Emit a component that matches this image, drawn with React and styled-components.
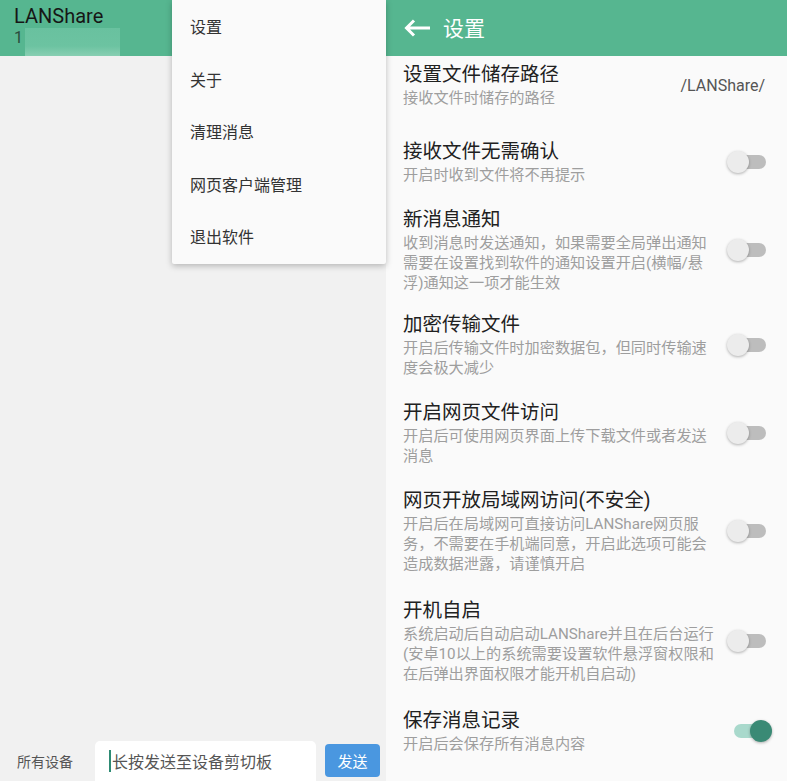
import React, {useState} from 'react'
import styled, {createGlobalStyle} from "styled-components";

const GlobalStyle = createGlobalStyle`
  html, body {
    margin: 0;
    padding: 0;
    height: 100%;
    overflow: hidden;
  }
  body {
    font-family: Roboto, "Noto Sans CJK SC", sans-serif;
    background: #f1f1f1;
  }
  #root {
    height: 100%;
  }
`

const GREEN = '#56b690'

const settings = [
    {title: '设置文件储存路径', desc: '接收文件时储存的路径', value: '/LANShare/', pad: '6px 0 20px'},
    {title: '接收文件无需确认', desc: '开启时收到文件将不再提示', toggle: false},
    {title: '新消息通知', desc: '收到消息时发送通知，如果需要全局弹出通知需要在设置找到软件的通知设置开启(横幅/悬浮)通知这一项才能生效', toggle: false, pad: '11px 0 8px'},
    {title: '加密传输文件', desc: '开启后传输文件时加密数据包，但同时传输速度会极大减少', toggle: false},
    {title: '开启网页文件访问', desc: '开启后可使用网页界面上传下载文件或者发送消息', toggle: false},
    {title: '网页开放局域网访问(不安全)', desc: '开启后在局域网可直接访问LANShare网页服务，不需要在手机端同意，开启此选项可能会造成数据泄露，请谨慎开启', toggle: false, pad: '11px 0 13px'},
    {title: '开机自启', desc: '系统启动后自动启动LANShare并且在后台运行(安卓10以上的系统需要设置软件悬浮窗权限和在后弹出界面权限才能开机自启动)', toggle: false, pad: '11px 0 13px'},
    {title: '保存消息记录', desc: '开启后会保存所有消息内容', toggle: true},
]

const menuItems = ['设置', '关于', '清理消息', '网页客户端管理', '退出软件']

function App() {
    const [ values, setValues ] = useState(settings.map(item => item.toggle))

    return (
        <Screen>
            <GlobalStyle/>
            <LeftPane>
                <MainHeader>
                    <AppName>LANShare</AppName>
                    <AppAddress>1<Redacted/></AppAddress>
                </MainHeader>
                <Messages/>
                <SendBar>
                    <Target>所有设备</Target>
                    <InputBox>
                        <Caret/>长按发送至设备剪切板
                    </InputBox>
                    <SendButton>发送</SendButton>
                </SendBar>
                <Menu>
                    {menuItems.map(item => <MenuItem key={item}>{item}</MenuItem>)}
                </Menu>
            </LeftPane>
            <RightPane>
                <SettingsHeader>
                    <svg width="27" height="18" viewBox="0 0 27 18">
                        <path d="M2 9 H26 M10 1.5 L2.5 9 L10 16.5" stroke="#fff" strokeWidth="3" fill="none"/>
                    </svg>
                    <HeaderTitle>设置</HeaderTitle>
                </SettingsHeader>
                <SettingsList>
                    {settings.map((item, index) => <Row key={item.title} $pad={item.pad}>
                        <RowText>
                            <RowTitle>{item.title}</RowTitle>
                            <RowDesc>{item.desc}</RowDesc>
                        </RowText>
                        {item.value && <RowValue>{item.value}</RowValue>}
                        {!item.value && <Switch onClick={() => {
                            const next = [...values]
                            next[index] = !next[index]
                            setValues(next)
                        }}>
                            <Track $on={values[index]}/>
                            <Thumb $on={values[index]}/>
                        </Switch>}
                    </Row>)}
                </SettingsList>
            </RightPane>
        </Screen>
    )
}

const Screen = styled.div`
  display: flex;
  height: 100%;
  width: 787px;
`

const LeftPane = styled.div`
  position: relative;
  width: 386px;
  flex: 0 0 386px;
  display: flex;
  flex-direction: column;
  background: #f1f1f1;
`

const MainHeader = styled.div`
  height: 56px;
  background: ${GREEN};
  padding-left: 14px;
  box-sizing: border-box;
  overflow: hidden;
`

const AppName = styled.div`
  font-size: 20px;
  line-height: 20px;
  padding-top: 6px;
  color: #161616;
`

const AppAddress = styled.div`
  display: flex;
  font-size: 16px;
  line-height: 20px;
  color: #2a4a3c;
  margin-top: 2px;
`

const Redacted = styled.span`
  display: inline-block;
  width: 95px;
  height: 30px;
  margin-left: 2px;
  background: linear-gradient(180deg, #69c19f 0%, #6cc3a1 60%, #8ed1b6 100%);
`

const Messages = styled.div`
  flex: 1;
`

const SendBar = styled.div`
  display: flex;
  align-items: flex-end;
  height: 40px;
  padding-left: 17px;
`

const Target = styled.div`
  font-size: 14px;
  color: #555;
  width: 78px;
  line-height: 20px;
  padding-bottom: 9px;
`

const InputBox = styled.div`
  display: flex;
  align-items: center;
  width: 221px;
  height: 40px;
  box-sizing: border-box;
  padding-left: 14px;
  background: #fff;
  border-radius: 5px 5px 0 0;
  font-size: 16px;
  color: #555;
`

const Caret = styled.span`
  display: inline-block;
  width: 2px;
  height: 22px;
  background: #2e8b74;
  margin-right: 1px;
`

const SendButton = styled.div`
  display: flex;
  align-items: center;
  justify-content: center;
  width: 55px;
  height: 33px;
  margin: 0 0 4px 9px;
  background: #4a97e0;
  border-radius: 4px;
  color: #fff;
  font-size: 15px;
`

const Menu = styled.div`
  position: absolute;
  left: 172px;
  top: 0;
  width: 214px;
  padding-bottom: 1px;
  background: #fafafa;
  box-shadow: 0 2px 6px rgba(0, 0, 0, 0.25);
  border-radius: 0 0 2px 2px;
`

const MenuItem = styled.div`
  height: 52.5px;
  display: flex;
  align-items: center;
  padding-left: 18px;
  font-size: 16px;
  color: #333;
`

const RightPane = styled.div`
  flex: 1;
  min-width: 0;
  display: flex;
  flex-direction: column;
  background: #fafafa;
`

const SettingsHeader = styled.div`
  height: 56px;
  flex: 0 0 56px;
  display: flex;
  align-items: center;
  padding-left: 18px;
  background: ${GREEN};
  color: #fff;
`

const HeaderTitle = styled.div`
  font-size: 21px;
  margin-left: 12px;
  margin-top: -2px;
`

const SettingsList = styled.div`
  display: flex;
  flex-direction: column;
  padding-left: 17px;
`

const Row = styled.div`
  display: flex;
  align-items: center;
  padding: ${props => props.$pad || '11px 0'};
`

const RowText = styled.div`
  flex: 1 1 auto;
  min-width: 0;
  max-width: 317px;
`

const RowTitle = styled.div`
  font-size: 19.5px;
  line-height: 26px;
  color: #212121;
`

const RowDesc = styled.div`
  font-size: 15.2px;
  line-height: 20px;
  color: #9e9e9e;
`

const RowValue = styled.div`
  flex: none;
  margin-left: auto;
  margin-right: 22px;
  font-size: 16px;
  color: #555;
`

const Switch = styled.div`
  position: relative;
  flex: none;
  width: 46px;
  height: 24px;
  margin-left: auto;
  margin-right: 15px;
  cursor: pointer;
`

const Track = styled.div`
  position: absolute;
  left: 8px;
  top: 5px;
  width: 32px;
  height: 14px;
  border-radius: 7px;
  background: ${props => props.$on ? '#a9d9cc' : '#bdbdbd'};
`

const Thumb = styled.div`
  position: absolute;
  top: 1px;
  left: ${props => props.$on ? '24px' : '1px'};
  width: 22px;
  height: 22px;
  border-radius: 50%;
  background: ${props => props.$on ? '#3a8a75' : '#ececec'};
  box-shadow: 0 1px 3px rgba(0, 0, 0, 0.3);
`

export default App
